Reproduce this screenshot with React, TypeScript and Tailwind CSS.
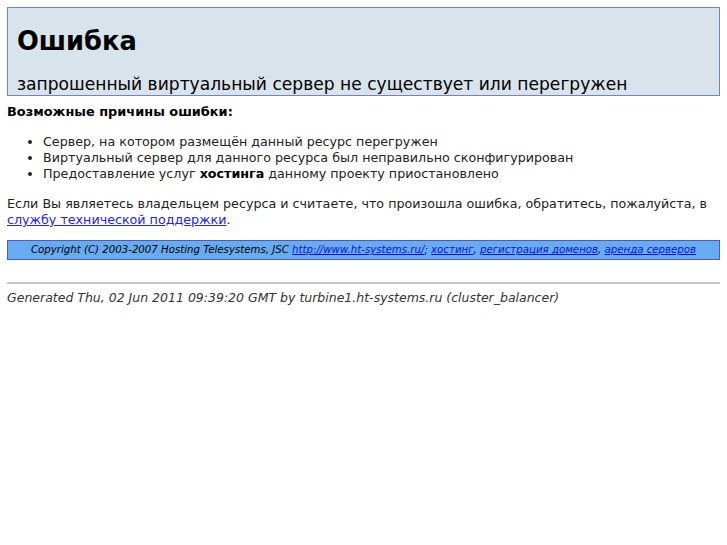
export default function App() {
  return (
    <div className="min-h-[545px] bg-white px-[7px] pt-[7px] font-['DejaVu_Sans',sans-serif] text-[12.7px] leading-[16px] text-[#222]">
      <div className="border border-[#7381c9] bg-[#d9e3eb] pl-[9px] pt-[18px] pb-[1px]">
        <h1 className="text-[25.7px] font-bold leading-[30px] text-black">Ошибка</h1>
        <div className="mt-[18px] text-[17.1px] leading-[20px] text-black">
          запрошенный виртуальный сервер не существует или перегружен
        </div>
      </div>

      <div className="mt-[8px] text-[12.9px] font-bold text-black">Возможные причины ошибки:</div>

      <ul className="mt-[14px] list-disc pl-[36px]">
        <li>Сервер, на котором размещён данный ресурс перегружен</li>
        <li>Виртуальный сервер для данного ресурса был неправильно сконфигурирован</li>
        <li>
          Предоставление услуг <b className="text-black">хостинга</b> данному проекту приостановлено
        </li>
      </ul>

      <p className="mt-[14px]">
        Если Вы являетесь владельцем ресурса и считаете, что произошла ошибка, обратитесь, пожалуйста, в{" "}
        <a href="#" className="text-[#2222ee] underline">
          службу технической поддержки
        </a>
        .
      </p>

      <div className="mt-[12px] flex h-[20px] items-center justify-center border border-[#4a5bc4] bg-[#67acf0] text-[10.2px] italic leading-[12px] text-black">
        <span>
          Copyright (C) 2003-2007 Hosting Telesystems, JSC{" "}
          <a href="#" className="text-[#1010dd] underline">http://www.ht-systems.ru/</a>;{" "}
          <a href="#" className="text-[#1010dd] underline">хостинг</a>,{" "}
          <a href="#" className="text-[#1010dd] underline">регистрация доменов</a>,{" "}
          <a href="#" className="text-[#1010dd] underline">аренда серверов</a>
        </span>
      </div>

      <hr className="mt-[22px] border-t-[2px] border-[#c8c8c8]" />

      <div className="mt-[6px] text-[12.5px] italic text-[#333]">
        Generated Thu, 02 Jun 2011 09:39:20 GMT by turbine1.ht-systems.ru (cluster_balancer)
      </div>
    </div>
  );
}
